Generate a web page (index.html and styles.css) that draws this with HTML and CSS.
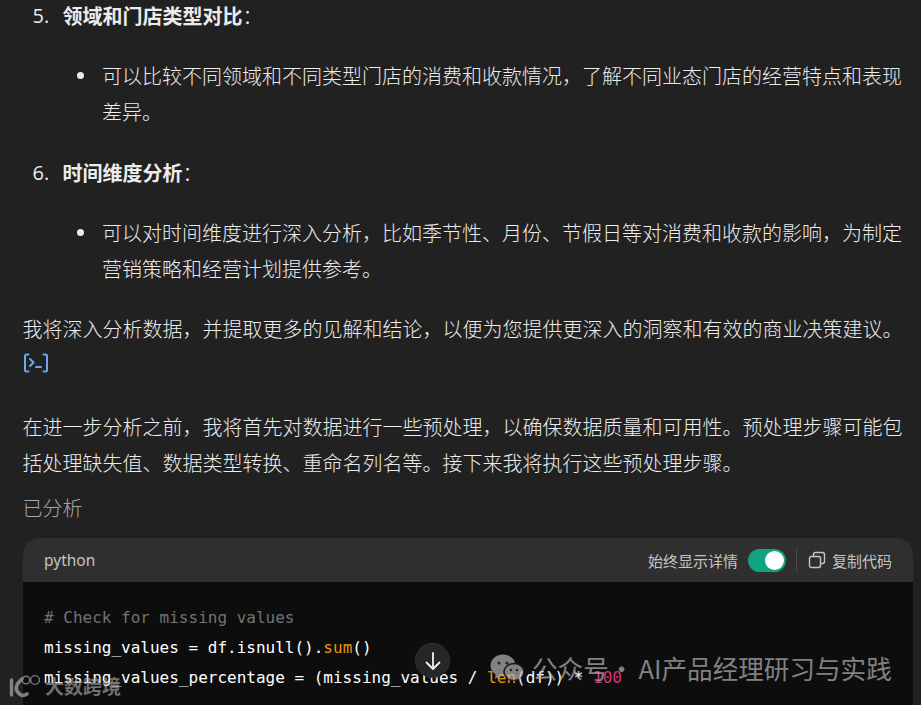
FILE: index.html
```html
<!DOCTYPE html>
<html lang="zh">
<head>
<meta charset="utf-8">
<title>数据分析</title>
<link rel="stylesheet" href="styles.css">
</head>
<body>
<main class="chat">
  <ol class="steps">
    <li class="step">
      <p class="step-title"><span class="num">5.</span><span><strong>领域和门店类型对比</strong>：</span></p>
      <ul class="bullets"><li>可以比较不同领域和不同类型门店的消费和收款情况，了解不同业态门店的经营特点和表现差异。</li></ul>
    </li>
    <li class="step">
      <p class="step-title"><span class="num">6.</span><span><strong>时间维度分析</strong>：</span></p>
      <ul class="bullets"><li>可以对时间维度进行深入分析，比如季节性、月份、节假日等对消费和收款的影响，为制定营销策略和经营计划提供参考。</li></ul>
    </li>
  </ol>
  <p class="para first">我将深入分析数据，并提取更多的见解和结论，以便为您提供更深入的洞察和有效的商业决策建议。</p>
  <svg class="term-icon" width="26" height="20" viewBox="0 0 26 20" fill="none" stroke="#6ea8e8" stroke-width="2" stroke-linecap="round" stroke-linejoin="round">
    <path d="M5.5 1.5H3.5Q2 1.5 2 3V17Q2 18.5 3.5 18.5H5.5"/>
    <path d="M20.5 1.5H22.5Q24 1.5 24 3V17Q24 18.5 22.5 18.5H20.5"/>
    <path d="M7 6L10.5 9.5L7 13"/>
    <path d="M13 14H18"/>
  </svg>
  <p class="para second">在进一步分析之前，我将首先对数据进行一些预处理，以确保数据质量和可用性。预处理步骤可能包括处理缺失值、数据类型转换、重命名列名等。接下来我将执行这些预处理步骤。</p>
  <div class="status">已分析</div>
  <section class="code-card">
    <header class="code-head">
      <span class="lang">python</span>
      <div class="tools">
        <span>始终显示详情</span>
        <span class="toggle"><span class="knob"></span></span>
        <span class="sep"></span>
        <svg width="18" height="18" viewBox="0 0 18 18" fill="none" stroke="#c4c4c4" stroke-width="1.4" stroke-linejoin="round">
          <rect x="1.5" y="5.5" width="11" height="11" rx="2"/>
          <path d="M5.5 5.5V3.5Q5.5 1.5 7.5 1.5H14.5Q16.5 1.5 16.5 3.5V10.5Q16.5 12.5 14.5 12.5H12.5"/>
        </svg>
        <span>复制代码</span>
      </div>
    </header>
    <pre class="code"><code><span class="c"># Check for missing values</span>
missing_values = df.isnull().<span class="f">sum</span>()
missing_values_percentage = (missing_values / <span class="f">len</span>(df)) * <span class="n">100</span></code></pre>
  </section>
  <button class="scroll-btn" aria-label="滚动到底部">
    <svg width="20" height="20" viewBox="0 0 20 20" fill="none" stroke="#f2f2f2" stroke-width="1.8" stroke-linecap="round" stroke-linejoin="round"><path d="M10 2V18M3.5 11.5L10 18L16.5 11.5"/></svg>
  </button>
  <div class="mark-left">
    <svg width="36" height="26" viewBox="0 0 36 26" fill="none" stroke="#c4c4c4" stroke-linecap="round">
      <path d="M3.5 7V22" stroke-width="3.4"/>
      <path d="M14 6Q6 13 9 18Q13 25 19 21" stroke-width="3.6"/>
      <circle cx="18" cy="7" r="3.8" stroke-width="1.4"/>
      <circle cx="27" cy="7" r="4.4" stroke-width="1.4"/>
    </svg>
    <span>大数跨境</span>
  </div>
  <div class="mark-right">
    <svg width="34" height="28" viewBox="0 0 34 28">
      <ellipse cx="13" cy="11.5" rx="12.5" ry="11" fill="#b8b8b8"/>
      <path d="M6 18L5 25L13 21Z" fill="#b8b8b8"/>
      <circle cx="9" cy="9" r="1.6" fill="#333"/>
      <circle cx="17" cy="9" r="1.6" fill="#333"/>
      <ellipse cx="24" cy="18" rx="10" ry="8.5" fill="#b8b8b8" stroke="#1c1c1c" stroke-width="1.4"/>
      <path d="M28 24L31 28L30 23Z" fill="#b8b8b8"/>
      <circle cx="21" cy="16" r="1.3" fill="#333"/>
      <circle cx="27" cy="16" r="1.3" fill="#333"/>
    </svg>
    <span>公众号<span class="mark-dot">·</span>AI产品经理研习与实践</span>
  </div>
</main>
</body>
</html>
```
FILE: styles.css
```css
* { box-sizing: border-box; }
html, body { margin: 0; height: 100%; }
body {
  width: 921px;
  height: 705px;
  overflow: hidden;
  background: #212121;
  color: #ececec;
  font-family: "Noto Sans CJK SC", "Noto Sans", sans-serif;
  font-size: 20px;
  font-weight: 300;
}
.chat { position: relative; height: 705px; overflow: hidden; padding: 0 8px 0 22.5px; }
p { margin: 0; }
.steps { margin: -2px 0 0; padding: 0; list-style: none; }
.step { line-height: 36px; margin-bottom: 25px; }
.step:last-child { margin-bottom: 24px; }
.step-title { display: flex; }
.num { width: 40px; padding-left: 10px; font-family: "Open Sans", sans-serif; font-weight: 400; }
.step-title strong { font-weight: 700; }
.bullets { margin: 24px 0 0; padding: 0 0 0 79.5px; list-style: none; }
.bullets li { position: relative; line-height: 36px; }
.bullets li::before { content: ""; position: absolute; left: -25px; top: 14px; width: 7px; height: 7px; border-radius: 50%; background: #ececec; }
.para { line-height: 36px; }
.term-icon { display: block; margin: 6px 0 0 0.5px; }
.para.second { margin-top: 36px; }
.status { margin-top: 9px; color: #a6a6a6; line-height: 36px; }
.code-card { margin: 12px 0 0 0.5px; width: 890px; border-radius: 16px 16px 0 0; overflow: hidden; background: #0d0d0d; }
.code-head { height: 44px; background: #2f2f2f; display: flex; align-items: center; justify-content: space-between; padding: 0 21px; color: #c4c4c4; }
.lang { font-family: "Noto Sans", sans-serif; font-size: 15.5px; font-weight: 400; }
.tools { display: flex; align-items: center; gap: 6px; font-size: 15px; font-weight: 400; }
.toggle { width: 38px; height: 23px; border-radius: 12px; background: #10a37f; margin-left: 4px; display: flex; align-items: center; justify-content: flex-end; padding-right: 2px; }
.knob { width: 19px; height: 19px; border-radius: 50%; background: #fff; }
.sep { width: 1px; height: 24px; background: #4a4a4a; margin: 0 5px 0 4px; }
.code { margin: 0; padding: 21px 20px 0 21px; height: 140px; font-family: "DejaVu Sans Mono", monospace; font-size: 16px; line-height: 30px; color: #fff; font-weight: 400; }
.code code { font-family: inherit; }
.c { color: #737373; }
.f { color: #e9950c; }
.n { color: #df3079; }
.scroll-btn { position: absolute; left: 415px; top: 643px; width: 35px; height: 35px; border-radius: 50%; border: 1px solid #333; background: #262626; padding: 0; display: flex; align-items: center; justify-content: center; }
.mark-left { position: absolute; left: 8px; top: 672px; display: flex; align-items: center; gap: 1px; color: #b4b4b4; font-size: 19px; font-weight: 700; opacity: .6; }
.mark-right { position: absolute; left: 490px; top: 652px; display: flex; align-items: center; gap: 8px; color: #b8b8b8; font-size: 25.6px; font-weight: 400; line-height: 32px; opacity: .68; }
.mark-dot { letter-spacing: 4px; }
```
